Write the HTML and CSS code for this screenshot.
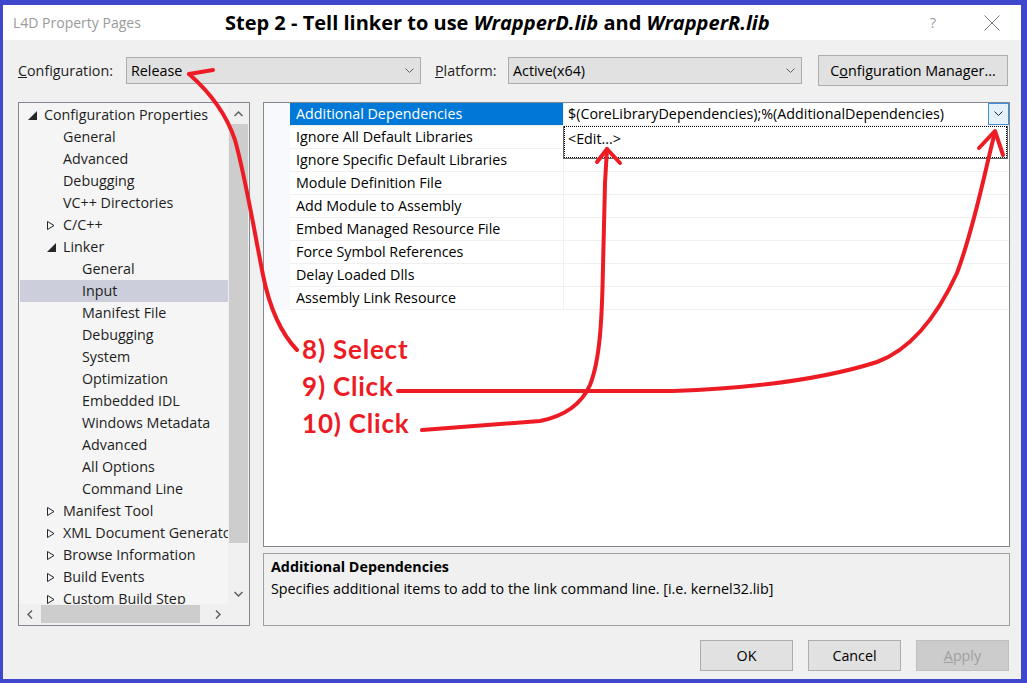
FILE: index.html
```html
<!DOCTYPE html>
<html>
<head>
<meta charset="utf-8">
<link rel="stylesheet" href="styles.css">
</head>
<body>
<div class="window">
  <div class="titlebar">
    <span class="app-title">L4D Property Pages</span>
    <span class="step-title">Step 2 - Tell linker to use <i>WrapperD.lib</i> and <i>WrapperR.lib</i></span>
    <span class="title-btns">
      <span class="help">?</span>
      <svg class="close" width="16" height="16" viewBox="0 0 16 16"><path d="M0.5 0.5 L15.5 15.5 M15.5 0.5 L0.5 15.5" stroke="#7a7a7a" stroke-width="1" fill="none"/></svg>
    </span>
  </div>

  <div class="config-row">
    <label class="lbl-config"><u>C</u>onfiguration:</label>
    <div class="combo combo-config"><span>Release</span><svg class="chev" width="9" height="6" viewBox="0 0 9 6"><path d="M0.5 0.5 L4.5 4.5 L8.5 0.5" stroke="#606060" fill="none"/></svg></div>
    <label class="lbl-platform"><u>P</u>latform:</label>
    <div class="combo combo-platform"><span>Active(x64)</span><svg class="chev" width="9" height="6" viewBox="0 0 9 6"><path d="M0.5 0.5 L4.5 4.5 L8.5 0.5" stroke="#606060" fill="none"/></svg></div>
    <button class="btn btn-manager">C<u>o</u>nfiguration Manager...</button>
  </div>

  <div class="main">
    <div class="tree">
      <div class="tree-items">
        <div class="node l0"><span class="tog"><svg width="9" height="9" viewBox="0 0 9 9"><polygon points="9,0 9,9 0,9" fill="#262626"/></svg></span><span class="txt">Configuration Properties</span></div>
        <div class="node l1"><span class="tog"></span><span class="txt">General</span></div>
        <div class="node l1"><span class="tog"></span><span class="txt">Advanced</span></div>
        <div class="node l1"><span class="tog"></span><span class="txt">Debugging</span></div>
        <div class="node l1"><span class="tog"></span><span class="txt">VC++ Directories</span></div>
        <div class="node l1"><span class="tog"><svg width="8" height="9" viewBox="0 0 8 9"><polygon points="0.5,0.5 7,4.5 0.5,8.5" fill="none" stroke="#262626"/></svg></span><span class="txt">C/C++</span></div>
        <div class="node l1"><span class="tog"><svg width="9" height="9" viewBox="0 0 9 9"><polygon points="9,0 9,9 0,9" fill="#262626"/></svg></span><span class="txt">Linker</span></div>
        <div class="node l2"><span class="tog"></span><span class="txt">General</span></div>
        <div class="node l2 selected"><span class="tog"></span><span class="txt">Input</span></div>
        <div class="node l2"><span class="tog"></span><span class="txt">Manifest File</span></div>
        <div class="node l2"><span class="tog"></span><span class="txt">Debugging</span></div>
        <div class="node l2"><span class="tog"></span><span class="txt">System</span></div>
        <div class="node l2"><span class="tog"></span><span class="txt">Optimization</span></div>
        <div class="node l2"><span class="tog"></span><span class="txt">Embedded IDL</span></div>
        <div class="node l2"><span class="tog"></span><span class="txt">Windows Metadata</span></div>
        <div class="node l2"><span class="tog"></span><span class="txt">Advanced</span></div>
        <div class="node l2"><span class="tog"></span><span class="txt">All Options</span></div>
        <div class="node l2"><span class="tog"></span><span class="txt">Command Line</span></div>
        <div class="node l1"><span class="tog"><svg width="8" height="9" viewBox="0 0 8 9"><polygon points="0.5,0.5 7,4.5 0.5,8.5" fill="none" stroke="#262626"/></svg></span><span class="txt">Manifest Tool</span></div>
        <div class="node l1"><span class="tog"><svg width="8" height="9" viewBox="0 0 8 9"><polygon points="0.5,0.5 7,4.5 0.5,8.5" fill="none" stroke="#262626"/></svg></span><span class="txt">XML Document Generator</span></div>
        <div class="node l1"><span class="tog"><svg width="8" height="9" viewBox="0 0 8 9"><polygon points="0.5,0.5 7,4.5 0.5,8.5" fill="none" stroke="#262626"/></svg></span><span class="txt">Browse Information</span></div>
        <div class="node l1"><span class="tog"><svg width="8" height="9" viewBox="0 0 8 9"><polygon points="0.5,0.5 7,4.5 0.5,8.5" fill="none" stroke="#262626"/></svg></span><span class="txt">Build Events</span></div>
        <div class="node l1"><span class="tog"><svg width="8" height="9" viewBox="0 0 8 9"><polygon points="0.5,0.5 7,4.5 0.5,8.5" fill="none" stroke="#262626"/></svg></span><span class="txt">Custom Build Step</span></div>
      </div>
      <div class="vscroll">
        <div class="sb-btn"><svg width="9" height="6" viewBox="0 0 9 6"><path d="M0.5 5 L4.5 1 L8.5 5" stroke="#606060" stroke-width="1.5" fill="none"/></svg></div>
        <div class="sb-track-v"><div class="thumb-v"></div></div>
        <div class="sb-btn"><svg width="9" height="6" viewBox="0 0 9 6"><path d="M0.5 1 L4.5 5 L8.5 1" stroke="#606060" stroke-width="1.5" fill="none"/></svg></div>
      </div>
      <div class="hscroll">
        <div class="sb-btn"><svg width="6" height="9" viewBox="0 0 6 9"><path d="M5 0.5 L1 4.5 L5 8.5" stroke="#606060" stroke-width="1.5" fill="none"/></svg></div>
        <div class="sb-track-h"><div class="thumb-h"></div></div>
        <div class="sb-btn"><svg width="6" height="9" viewBox="0 0 6 9"><path d="M1 0.5 L5 4.5 L1 8.5" stroke="#606060" stroke-width="1.5" fill="none"/></svg></div>
      </div>
      <div class="corner"></div>
    </div>

    <div class="right">
      <div class="grid">
        <div class="row sel"><span class="gut"></span><span class="name">Additional Dependencies</span><span class="val">$(CoreLibraryDependencies);%(AdditionalDependencies)<span class="dd-btn"><svg width="9" height="6" viewBox="0 0 9 6"><path d="M0.5 0.5 L4.5 4.5 L8.5 0.5" stroke="#1e1e1e" fill="none"/></svg></span></span></div>
        <div class="row"><span class="gut"></span><span class="name">Ignore All Default Libraries</span><span class="val"></span></div>
        <div class="row"><span class="gut"></span><span class="name">Ignore Specific Default Libraries</span><span class="val"></span></div>
        <div class="row"><span class="gut"></span><span class="name">Module Definition File</span><span class="val"></span></div>
        <div class="row"><span class="gut"></span><span class="name">Add Module to Assembly</span><span class="val"></span></div>
        <div class="row"><span class="gut"></span><span class="name">Embed Managed Resource File</span><span class="val"></span></div>
        <div class="row"><span class="gut"></span><span class="name">Force Symbol References</span><span class="val"></span></div>
        <div class="row"><span class="gut"></span><span class="name">Delay Loaded Dlls</span><span class="val"></span></div>
        <div class="row"><span class="gut"></span><span class="name">Assembly Link Resource</span><span class="val"></span></div>
        <div class="dd-list"><div class="dd-item">&lt;Edit...&gt;</div></div>
      </div>
      <div class="desc">
        <div class="desc-title">Additional Dependencies</div>
        <div>Specifies additional items to add to the link command line. [i.e. kernel32.lib]</div>
      </div>
    </div>
  </div>

  <div class="buttons">
    <button class="btn">OK</button>
    <button class="btn">Cancel</button>
    <button class="btn disabled"><u>A</u>pply</button>
  </div>

  <svg class="arrows" width="1027" height="683" viewBox="0 0 1027 683">
    <g stroke="#ed1c24" stroke-width="4" fill="none" stroke-linecap="round" stroke-linejoin="round">
      <path d="M189 74 C205 88 225 110 235 140 C245 175 255 235 263 275 C268 300 278 330 297 350"/>
      <path d="M189 74 L213 70"/>
      <path d="M398 391 L673 391 C760 388 830 377 877 362 C915 348 940 310 957 273 C975 225 985 170 995 132"/>
      <path d="M979 148 L995 131 L1003 155"/>
      <path d="M422 430 L540 421 C565 416 582 403 590 385 C600 360 602 320 603 267 L605 183 L607 149"/>
      <path d="M597 162 L607 149 L620 163"/>
    </g>
  </svg>
  <div class="notes">
    <div>8) Select</div>
    <div>9) Click</div>
    <div>10) Click</div>
  </div>
</div>
</body>
</html>
```

FILE: styles.css
```css
* { box-sizing: border-box; }
html, body { margin: 0; padding: 0; }
body {
  width: 1027px;
  height: 683px;
  overflow: hidden;
  font-family: "Open Sans", "Noto Sans", sans-serif;
  font-size: 14.3px;
  color: #1e1e1e;
  background: #f0f0f0;
}
.window {
  position: relative;
  width: 1027px;
  height: 683px;
  border-style: solid;
  border-color: #3f48cc;
  border-width: 5px 6px 4px 3px;
  display: flex;
  flex-direction: column;
  background: #f0f0f0;
}

/* title bar */
.titlebar {
  flex: none;
  height: 35px;
  background: #fff;
  display: flex;
  align-items: center;
}
.app-title {
  width: 222px;
  padding-left: 10px;
  color: #9a9a9a;
  font-size: 14px;
}
.step-title {
  font-family: "Open Sans", "Noto Sans", sans-serif;
  font-weight: 700;
  font-size: 20px;
  color: #000;
  white-space: nowrap;
}
.title-btns {
  margin-left: auto;
  display: flex;
  align-items: center;
  padding-right: 21px;
}
.help {
  color: #9a9a9a;
  font-size: 14px;
  width: 8px;
  margin-right: 46px;
}
.close { display: block; }

/* configuration row */
.config-row {
  flex: none;
  margin-top: 15px;
  height: 31px;
  padding-left: 15px;
  display: flex;
  align-items: center;
}
.lbl-config { width: 108px; }
.lbl-platform { width: 73px; margin-left: 14px; }
.combo {
  height: 27px;
  background: #e1e1e1;
  border: 1px solid #adadad;
  display: flex;
  align-items: center;
  justify-content: space-between;
  padding: 0 6px 0 4px;
  color: #000;
}
.combo-config { width: 295px; }
.combo-platform { width: 294px; }
.chev { display: block; }
.btn {
  font-family: inherit;
  font-size: 14.3px;
  color: #000;
  background: #e1e1e1;
  border: 1px solid #adadad;
  height: 31px;
  padding: 0;
}
.btn-manager { width: 190px; margin-left: 16px; }

/* main area */
.main {
  flex: none;
  margin-top: 16px;
  height: 524px;
  padding-left: 15px;
  display: flex;
  gap: 13px;
}
.tree {
  width: 232px;
  height: 524px;
  border: 1px solid #828790;
  background: #f5f5f5;
  display: grid;
  grid-template-columns: 209px 21px;
  grid-template-rows: 501px 21px;
}
.tree-items {
  overflow: hidden;
  padding: 1px 0 0 1px;
}
.node {
  height: 22px;
  display: flex;
  align-items: center;
  white-space: nowrap;
  overflow: hidden;
}
.node .txt { padding-bottom: 2px; }
.node.l0 { padding-left: 6px; }
.node.l1 { padding-left: 25px; }
.node.l2 { padding-left: 44px; }
.node.selected { background: #cccedb; }
.tog {
  width: 18px;
  flex: none;
  display: flex;
  align-items: center;
  padding-left: 2px;
}
.tog svg { display: block; }

.vscroll {
  background: #f0f0f0;
  display: flex;
  flex-direction: column;
}
.sb-btn {
  width: 21px;
  height: 21px;
  flex: none;
  display: flex;
  align-items: center;
  justify-content: center;
}
.sb-track-v { flex: 1; }
.thumb-v {
  margin: 0 1px;
  height: 419px;
  background: #cdcdcd;
}
.hscroll {
  background: #f0f0f0;
  display: flex;
}
.sb-track-h { flex: 1; }
.thumb-h {
  margin: 1px 0 0 1px;
  width: 159px;
  height: 18px;
  background: #cdcdcd;
}
.corner { background: #f0f0f0; }

/* right side */
.right {
  width: 747px;
  display: flex;
  flex-direction: column;
  gap: 6px;
}
.grid {
  position: relative;
  height: 445px;
  border: 1px solid #828790;
  background: #fff;
  color: #000;
}
.row {
  height: 23px;
  display: flex;
}
.gut {
  width: 26px;
  flex: none;
  background: #f7f9fc;
}
.name {
  width: 273px;
  flex: none;
  padding-left: 6px;
  line-height: 22px;
  border-bottom: 1px solid #f0f0f0;
  white-space: nowrap;
}
.val {
  flex: 1;
  position: relative;
  padding-left: 4px;
  line-height: 22px;
  border-left: 1px solid #f0f0f0;
  border-bottom: 1px solid #f0f0f0;
  white-space: nowrap;
}
.row.sel .name {
  background: #0078d7;
  color: #fff;
}
.dd-btn {
  position: absolute;
  right: 0;
  top: 0;
  width: 21px;
  height: 22px;
  background: #e5f1fb;
  border: 1px solid #3c8ee0;
  display: flex;
  align-items: center;
  justify-content: center;
}
.dd-list {
  position: absolute;
  left: 299px;
  top: 23px;
  width: 445px;
  height: 33px;
  background: #fff;
  border: 1px solid #646464;
  border-top: none;
}
.dd-item {
  height: 32px;
  line-height: 24px;
  border: 1px dotted #000;
  padding-left: 3px;
}
.desc {
  height: 73px;
  border: 1px solid #a0a0a0;
  background: #f0f0f0;
  padding: 2px 0 0 7px;
  line-height: 22px;
  color: #000;
}
.desc-title { font-weight: 700; }

/* buttons */
.buttons {
  flex: none;
  margin-top: 14px;
  height: 31px;
  padding-right: 12px;
  display: flex;
  justify-content: flex-end;
  gap: 15px;
}
.buttons .btn { width: 93px; }
.btn.disabled {
  background: #cccccc;
  border-color: #bfbfbf;
  color: #a0a0a0;
}

/* annotations */
.arrows {
  position: absolute;
  left: -3px;
  top: -5px;
  pointer-events: none;
}
.notes {
  position: absolute;
  left: 299px;
  top: 326px;
  font-family: Lato, "Liberation Sans", sans-serif;
  font-weight: 700;
  font-size: 26px;
  line-height: 37px;
  letter-spacing: 0.8px;
  color: #ed1c24;
}
```
